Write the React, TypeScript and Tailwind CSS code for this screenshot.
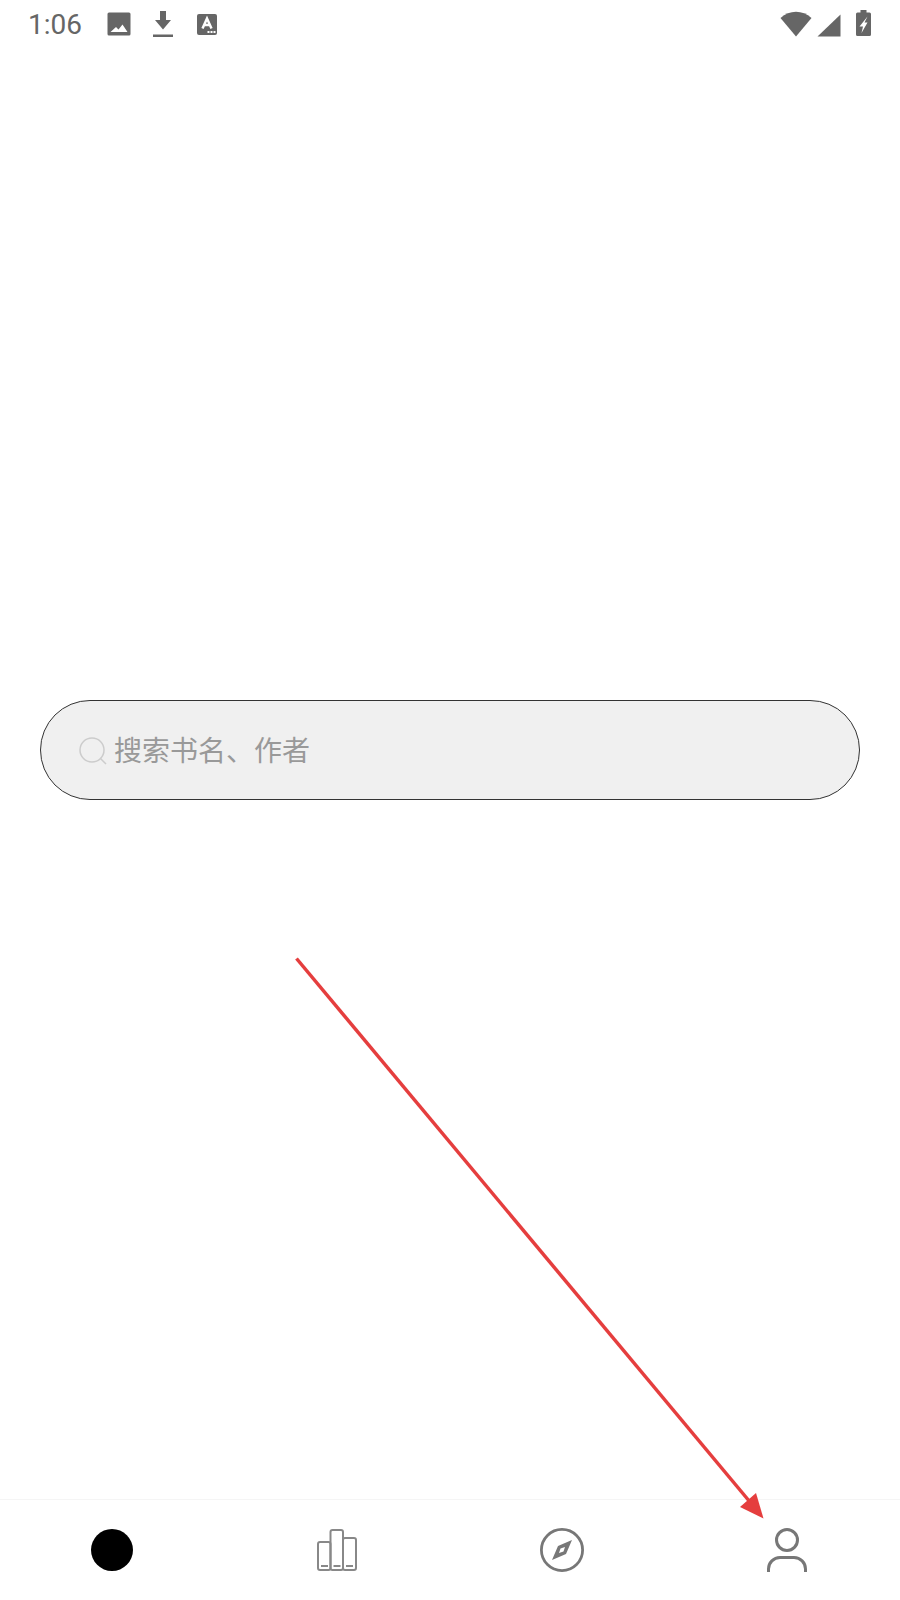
import React from "react";

const StatusBar = () => (
	<div className="h-[48px] shrink-0 flex items-center justify-between pl-[28px] pr-[29px] text-[#666666]">
		<div className="flex items-center">
			<span className="text-[28px] leading-none font-['Roboto',sans-serif] mr-[25px] mt-[2px]">1:06</span>
			{/* picture */}
			<svg width="24" height="24" viewBox="0 0 24 24" className="mr-[22px]">
				<path
					fill="#666666"
					fillRule="evenodd"
					d="M2 0.500h20a1.500 1.500 0 0 1 1.500 1.500v20a1.500 1.500 0 0 1-1.500 1.500h-20a1.500 1.500 0 0 1-1.500-1.500v-20a1.500 1.500 0 0 1 1.500-1.500zM3.500 20h17l-5-7.500-4 5-2.500-2.500z"
				/>
			</svg>
			{/* download */}
			<svg width="20" height="26" viewBox="0 0 20 26" className="mr-[24px]">
				<path fill="#666666" d="M7 0h6v9h5l-8 9.500-8-9.500h5z" />
				<rect x="0" y="23.500" width="20" height="2.500" fill="#666666" />
			</svg>
			{/* font file */}
			<svg width="20" height="21" viewBox="0 0 20 21">
				<rect x="0" y="0" width="20" height="21" rx="2" fill="#666666" />
				<path fill="none" stroke="#ffffff" strokeWidth="2.500" d="M5.500 14.500l4.500-10 4.500 10M7 11h6" />
				<rect x="10.500" y="17" width="2" height="2" fill="#ffffff" />
				<rect x="13.500" y="17" width="2" height="2" fill="#ffffff" />
				<rect x="16.500" y="17" width="2" height="2" fill="#ffffff" />
			</svg>
		</div>
		<div className="flex items-center">
			{/* wifi */}
			<svg width="32" height="26" viewBox="0 0 32 26" className="mr-[5px] mb-[1px]">
				<path fill="#666666" d="M0.500 7C9.500-1.500 22.500-1.500 31.500 7L16 25.500z" />
			</svg>
			{/* signal */}
			<svg width="24" height="23" viewBox="0 0 24 23" className="mr-[15px] mt-[2px]">
				<path fill="#666666" d="M23.500 0.500V22.500H0.500z" />
			</svg>
			{/* battery */}
			<svg width="15" height="26" viewBox="0 0 15 26" className="mb-[2px]">
				<path
					fill="#666666"
					fillRule="evenodd"
					d="M4.500 0h6v2.500h3a1.500 1.500 0 0 1 1.500 1.500v20.500a1.500 1.500 0 0 1-1.500 1.500h-12a1.500 1.500 0 0 1-1.500-1.500v-20.500a1.500 1.500 0 0 1 1.500-1.500h3zM11.500 6.500L3.500 16.500h3.500L5.500 23l6-10.500h-3z"
				/>
			</svg>
		</div>
	</div>
);

const NavItem = ({ children }: { children: React.ReactNode }) => (
	<div className="flex-1 flex justify-center pt-[28px] pr-[1px]">{children}</div>
);

const App = () => {
	return (
		<div className="relative h-[1600px] w-[900px] flex flex-col bg-white overflow-hidden">
			<StatusBar />

			<main className="flex-1 pt-[652px] px-[40px]">
				<div className="h-[100px] rounded-full border border-[#333333] bg-[#f0f0f0] flex items-center pl-[38px]">
					<svg width="28" height="28" viewBox="0 0 28 28" className="mr-[7px] mt-[2px]">
						<circle cx="13" cy="13" r="12" fill="none" stroke="#cccccc" strokeWidth="1.500" />
						<path d="M21.500 21.500l5.500 5.500" stroke="#cccccc" strokeWidth="1.500" fill="none" />
					</svg>
					<span className="text-[28px] leading-none text-[#999999] font-['Noto_Sans_CJK_SC',sans-serif] mb-[2px]">
						搜索书名、作者
					</span>
				</div>
			</main>

			<nav className="h-[101px] shrink-0 border-t border-[#f5f5f5] flex">
				<NavItem>
					<div className="w-[42px] h-[42px] rounded-full bg-black mt-[1px]" />
				</NavItem>
				<NavItem>
					<svg width="40" height="42" viewBox="0 0 40 42" className="mt-[1px]">
						<g fill="none" stroke="#888888" strokeWidth="2">
							<rect x="1" y="13" width="12.500" height="28" rx="2" />
							<rect x="13.500" y="1" width="12.500" height="40" rx="2" />
							<rect x="26" y="9" width="13" height="32" rx="2" />
							<path d="M4 37h7M16.500 37h7M29 37h7" />
						</g>
					</svg>
				</NavItem>
				<NavItem>
					<svg width="44" height="44" viewBox="0 0 44 44">
						<circle cx="22" cy="22" r="20.600" fill="none" stroke="#777777" strokeWidth="2.800" />
						<path
							fillRule="evenodd"
							fill="#777777"
							d="M32 12L26 26 12 32 18 18zM25 19L20.500 20.500 19 25 23.500 23.500z"
						/>
					</svg>
				</NavItem>
				<NavItem>
					<svg width="42" height="44" viewBox="0 0 42 44">
						<g fill="none" stroke="#777777" strokeWidth="3">
							<circle cx="21" cy="12" r="10.500" />
							<path d="M2.500 44V41a11.500 11.500 0 0 1 11.500-11.500h14a11.500 11.500 0 0 1 11.500 11.500v3" />
						</g>
					</svg>
				</NavItem>
			</nav>

			{/* annotation arrow lies over the page */}
			<svg width="900" height="1600" viewBox="0 0 900 1600" className="absolute inset-0 pointer-events-none">
				<path d="M296.500 958.500L750 1502" stroke="#e53e3e" strokeWidth="3.500" fill="none" />
				<path d="M756 1493L740 1507L763.500 1518.500z" fill="#e53e3e" />
			</svg>
		</div>
	);
};

export default App;
